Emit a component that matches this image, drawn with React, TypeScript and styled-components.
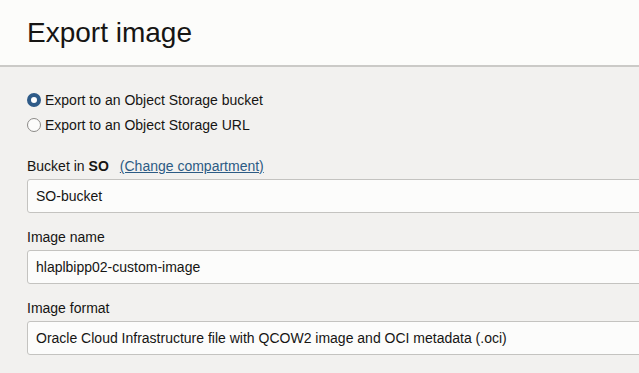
import * as React from 'react'
import styled, { createGlobalStyle } from 'styled-components'

const GlobalStyle = createGlobalStyle`
  html, body {
    margin: 0;
    padding: 0;
    background: #f2f1ef;
  }
  body {
    font-family: 'Liberation Sans', Arial, sans-serif;
    color: #161513;
  }
`

const Page = styled.div`
  width: 639px;
  height: 373px;
  overflow: hidden;
  background: #f2f1ef;
`

const Header = styled.header`
  height: 67px;
  box-sizing: border-box;
  background: #fcfcfa;
  border-bottom: 2px solid #cbcac7;
  padding: 17px 0 0 27px;
`

const Title = styled.h1`
  margin: 0;
  font-size: 28px;
  font-weight: 400;
  line-height: 32px;
  color: #161513;
`

const Body = styled.div`
  padding: 24px 0 0 27px;
  display: flex;
  flex-direction: column;
`

const RadioGroup = styled.div`
  display: flex;
  flex-direction: column;
  gap: 7px;
  margin-bottom: 23px;
`

const RadioRow = styled.label`
  display: flex;
  align-items: center;
  gap: 4px;
  font-size: 14px;
  line-height: 18px;
  color: #161513;
`

const RadioDot = styled.span<{ $checked?: boolean }>`
  width: 14px;
  height: 14px;
  box-sizing: border-box;
  border-radius: 50%;
  flex: none;
  background: ${(p) => (p.$checked ? '#fff' : '#fcfcfb')};
  border: ${(p) => (p.$checked ? '4px solid #2f5b88' : '1px solid #8c8a87')};
`

const Field = styled.div`
  display: flex;
  flex-direction: column;
  margin-bottom: 15px;
`

const Label = styled.div`
  font-size: 14px;
  line-height: 18px;
  margin-bottom: 4px;
  display: flex;
  align-items: baseline;
  color: #161513;

  b {
    font-weight: 700;
    margin-left: 4px;
  }
`

const ChangeLink = styled.a`
  margin-left: 11px;
  color: #2c5b84;
  text-decoration: underline;
  cursor: pointer;
`

const Input = styled.div`
  height: 34px;
  box-sizing: border-box;
  margin-right: -20px;
  background: #fcfcfb;
  border: 1px solid #c4c3c0;
  border-radius: 3px;
  padding: 0 8px;
  display: flex;
  align-items: center;
  font-size: 14px;
  color: #161513;
  white-space: nowrap;
`

export default function App() {
  return (
    <Page>
      <GlobalStyle />
      <Header>
        <Title>Export image</Title>
      </Header>
      <Body>
        <RadioGroup>
          <RadioRow>
            <RadioDot $checked />
            Export to an Object Storage bucket
          </RadioRow>
          <RadioRow>
            <RadioDot />
            Export to an Object Storage URL
          </RadioRow>
        </RadioGroup>
        <Field>
          <Label>
            Bucket in<b>SO</b>
            <ChangeLink>(Change compartment)</ChangeLink>
          </Label>
          <Input>SO-bucket</Input>
        </Field>
        <Field>
          <Label>Image name</Label>
          <Input>hlaplbipp02-custom-image</Input>
        </Field>
        <Field>
          <Label>Image format</Label>
          <Input>Oracle Cloud Infrastructure file with QCOW2 image and OCI metadata (.oci)</Input>
        </Field>
      </Body>
    </Page>
  )
}
